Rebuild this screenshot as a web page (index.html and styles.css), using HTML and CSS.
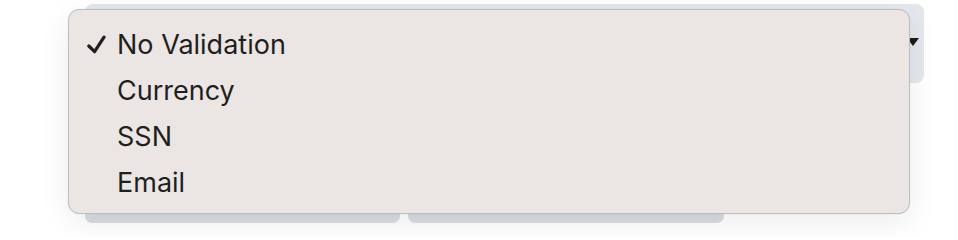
FILE: index.html
```html
<!DOCTYPE html>
<html>
<head>
<meta charset="utf-8">
<link rel="stylesheet" href="styles.css">
</head>
<body>
<div class="page">
  <div class="select">
    <span class="arrow"></span>
  </div>
  <div class="fields">
    <div class="field"></div>
    <div class="field"></div>
  </div>
  <div class="menu">
    <div class="item checked">
      <svg class="check" viewBox="0 0 20 20" width="20" height="20"><path d="M1.8 11 L7.6 16.7 L17 2.2" fill="none" stroke="#1f1f1f" stroke-width="3.2" stroke-linecap="round" stroke-linejoin="round"/></svg>
      <span>No Validation</span>
    </div>
    <div class="item"><span>Currency</span></div>
    <div class="item"><span>SSN</span></div>
    <div class="item"><span>Email</span></div>
  </div>
</div>
</body>
</html>
```
FILE: styles.css
```css
html, body {
  margin: 0;
  padding: 0;
  background: #ffffff;
  width: 958px;
  height: 236px;
  overflow: hidden;
}
.page {
  position: relative;
  padding-top: 4px;
  font-family: Inter, "Noto Sans", sans-serif;
}
.select {
  margin-left: 85px;
  width: 839px;
  height: 79px;
  background: #e4e8ec;
  border-radius: 8px;
  display: flex;
  align-items: center;
  justify-content: flex-end;
  box-sizing: border-box;
  padding-right: 5px;
}
.arrow {
  width: 0;
  height: 0;
  border-left: 6px solid transparent;
  border-right: 6px solid transparent;
  border-top: 8px solid #1a1a1a;
  margin-top: -4px;
}
.fields {
  display: flex;
  gap: 8px;
  margin-left: 85px;
  margin-top: 30px;
}
.field {
  width: 315px;
  height: 110px;
  background: #d9dce0;
  border-radius: 7px;
}
.field + .field {
  width: 316px;
}
.menu {
  position: absolute;
  left: 68px;
  top: 9px;
  width: 842px;
  height: 205px;
  box-sizing: border-box;
  background: #ebe6e3;
  border: 1px solid #bdbdbd;
  border-radius: 11px;
  box-shadow: 0 8px 30px rgba(0, 0, 0, 0.08), 0 0 2px rgba(0, 0, 0, 0.05);
  padding-top: 11px;
}
.item {
  height: 46px;
  display: flex;
  align-items: center;
  padding-left: 48px;
  position: relative;
  font-size: 27px;
  color: #1f1f1f;
}
.check {
  position: absolute;
  left: 18px;
  top: 14px;
}
```
